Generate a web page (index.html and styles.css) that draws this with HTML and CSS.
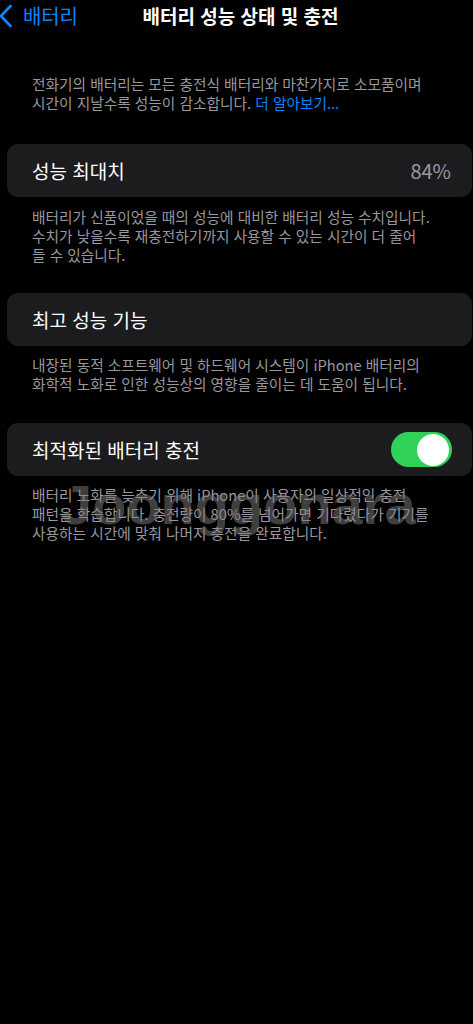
FILE: index.html
```html
<!DOCTYPE html>
<html lang="ko">
<head>
<meta charset="utf-8">
<title>배터리 성능 상태 및 충전</title>
<link rel="stylesheet" href="styles.css">
</head>
<body>
<div class="screen">
  <header class="nav">
    <a class="back">
      <svg class="chev" width="14" height="24" viewBox="0 0 14 24"><path d="M11.5 2 L2 12 L11.5 22" fill="none" stroke="#0a84ff" stroke-width="2.6" stroke-linecap="round" stroke-linejoin="round"/></svg>
      <span class="back-label">배터리</span>
    </a>
    <h1 class="title">배터리 성능 상태 및 충전</h1>
  </header>

  <p class="note intro">전화기의 배터리는 모든 충전식 배터리와 마찬가지로 소모품이며<br>시간이 지날수록 성능이 감소합니다. <span class="link">더 알아보기...</span></p>

  <div class="card card-first">
    <span class="label">성능 최대치</span>
    <span class="value">84%</span>
  </div>
  <p class="note">배터리가 신품이었을 때의 성능에 대비한 배터리 성능 수치입니다.<br>수치가 낮을수록 재충전하기까지 사용할 수 있는 시간이 더 줄어<br>들 수 있습니다.</p>

  <div class="card">
    <span class="label">최고 성능 기능</span>
  </div>
  <p class="note">내장된 동적 소프트웨어 및 하드웨어 시스템이 iPhone 배터리의<br>화학적 노화로 인한 성능상의 영향을 줄이는 데 도움이 됩니다.</p>

  <div class="card card-last">
    <span class="label">최적화된 배터리 충전</span>
    <span class="toggle"><span class="thumb"></span></span>
  </div>
  <div class="note-wrap">
    <p class="note">배터리 노화를 늦추기 위해 iPhone이 사용자의 일상적인 충전<br>패턴을 학습합니다. 충전량이 80%를 넘어가면 기다렸다가 기기를<br>사용하는 시간에 맞춰 나머지 충전을 완료합니다.</p>
    <span class="watermark">Joonggonara</span>
  </div>
</div>
</body>
</html>
```

FILE: styles.css
```css
html, body {
  margin: 0;
  padding: 0;
  background: #000;
}
body {
  font-family: "Noto Sans CJK KR", "Noto Sans", sans-serif;
  color: #fff;
  width: 473px;
  height: 1024px;
  overflow: hidden;
}
.screen {
  display: flex;
  flex-direction: column;
}
.nav {
  position: relative;
  height: 34px;
  display: flex;
  align-items: center;
  justify-content: center;
}
.back {
  position: absolute;
  left: 0;
  top: 4px;
  display: flex;
  align-items: center;
  gap: 10px;
  color: #0a84ff;
}
.chev {
  display: block;
  margin-left: -1px;
}
.back-label {
  font-size: 20px;
  line-height: 24px;
  letter-spacing: -0.2px;
}
.title {
  margin: -2px 0 0 8px;
  font-size: 19px;
  font-weight: 700;
  letter-spacing: 0;
  line-height: 24px;
}
.note {
  margin: 9px 0 0;
  padding: 0 0 0 32px;
  font-size: 14.7px;
  line-height: 19px;
  color: #98989e;
  letter-spacing: 0;
}
.intro {
  margin-top: 40px;
}
.link {
  color: #0a84ff;
}
.card {
  margin: 29px 1px 0 7px;
  height: 53px;
  border-radius: 11px;
  background: #1c1c1e;
  display: flex;
  align-items: center;
  justify-content: space-between;
  padding: 0 20px 0 25px;
}
.card-first {
  margin-top: 32px;
}
.card-first + .note {
  margin-top: 10px;
}
.card-last {
  margin-top: 30px;
}
.label {
  font-size: 19px;
  letter-spacing: 0;
}
.value {
  font-size: 20px;
  color: #98989e;
  margin-right: 1px;
}
.toggle {
  width: 61px;
  height: 35px;
  border-radius: 18px;
  background: #30d158;
  display: flex;
  align-items: center;
  justify-content: flex-end;
  padding-right: 3px;
  box-sizing: border-box;
}
.thumb {
  width: 32px;
  height: 32px;
  border-radius: 50%;
  background: #fff;
}
.note-wrap {
  position: relative;
  margin-top: 9px;
}
.note-wrap .note {
  margin-top: 0;
}
.watermark {
  position: absolute;
  left: 61px;
  top: -13px;
  font-family: "Liberation Sans", "DejaVu Sans", sans-serif;
  font-size: 56px;
  font-weight: 700;
  letter-spacing: 0;
  color: rgba(125, 125, 125, 0.5);
  pointer-events: none;
}
```
